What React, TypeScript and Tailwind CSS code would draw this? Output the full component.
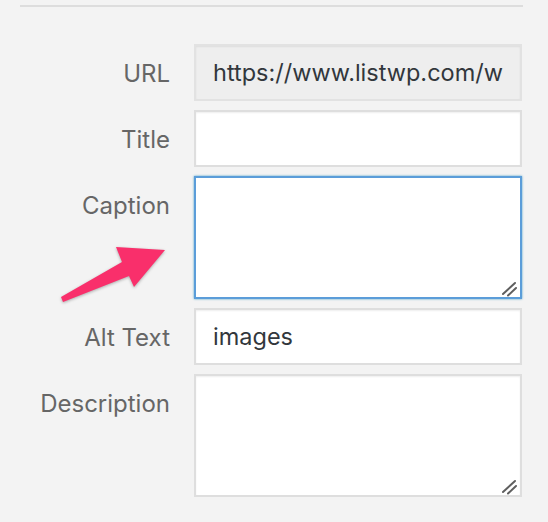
import type { ReactNode } from 'react';

const FONT = "font-['Inter','Open_Sans',sans-serif]";

function ResizeGrip() {
  return (
    <svg
      className="pointer-events-none absolute bottom-0 right-0"
      width="24"
      height="22"
      viewBox="0 0 24 22"
    >
      <line x1="7" y1="19" x2="19" y2="8" stroke="#5f5f5f" strokeWidth="2" strokeLinecap="round" />
      <line x1="12" y1="20.5" x2="20" y2="13" stroke="#5f5f5f" strokeWidth="2" strokeLinecap="round" />
    </svg>
  );
}

function Field({
  label,
  children,
}: {
  label: string;
  children: ReactNode;
}) {
  return (
    <>
      <div className="pt-[16px] text-right text-[24px] leading-[28px] text-[#666]">{label}</div>
      {children}
    </>
  );
}

function TextBox({ value, readOnly }: { value?: string; readOnly?: boolean }) {
  return (
    <div
      className={`flex h-[57px] items-center overflow-hidden whitespace-nowrap border-2 px-[17px] text-[23.5px] text-[#32373c] shadow-[inset_0_1px_2px_rgba(0,0,0,0.07)] ${
        readOnly ? 'border-[#e2e2e2] bg-[#eeeeee]' : 'border-[#dedede] bg-white'
      }`}
    >
      {value}
    </div>
  );
}

function TextArea({ focused }: { focused?: boolean }) {
  return (
    <div
      className={`relative h-[123px] border-2 bg-white ${
        focused
          ? 'border-[#5b9dd9] shadow-[0_0_2px_rgba(30,140,190,0.8)]'
          : 'border-[#dedede] shadow-[inset_0_1px_2px_rgba(0,0,0,0.07)]'
      }`}
    >
      <ResizeGrip />
    </div>
  );
}

export default function App() {
  return (
    <div className={`relative h-[522px] w-[548px] overflow-hidden bg-[#f3f3f3] ${FONT}`}>
      <div className="ml-[20px] mt-[5px] h-[2px] w-[503px] bg-[#dddddd]" />

      <div className="mt-[37px] grid grid-cols-[170px_328px] gap-x-[24px] gap-y-[9px]">
        <Field label="URL">
          <TextBox value="https://www.listwp.com/w" readOnly />
        </Field>
        <Field label="Title">
          <TextBox />
        </Field>
        <Field label="Caption">
          <TextArea focused />
        </Field>
        <Field label="Alt Text">
          <TextBox value="images" />
        </Field>
        <Field label="Description">
          <TextArea />
        </Field>
      </div>

      {/* annotation arrow pointing at the caption box */}
      <svg
        className="pointer-events-none absolute left-[55px] top-[240px] drop-shadow-[0_1px_1.5px_rgba(0,0,0,0.3)]"
        width="120"
        height="66"
        viewBox="0 0 120 66"
      >
        <polygon
          points="6,57 67,22 61,7 110,10 79,47 74,36 8,62"
          fill="#f92f6b"
          strokeLinejoin="round"
        />
      </svg>
    </div>
  );
}
